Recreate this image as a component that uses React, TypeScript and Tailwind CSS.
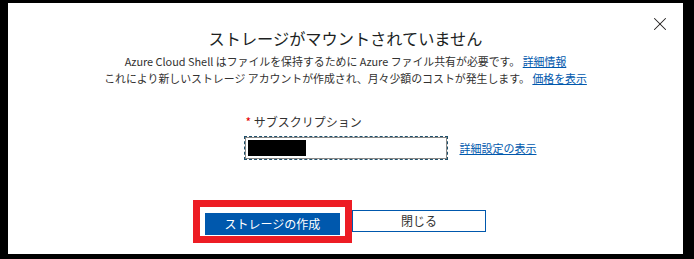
import { X } from "lucide-react";

const font = { fontFamily: '"Noto Sans CJK JP", "Liberation Sans", sans-serif' };

export default function App() {
    return (
        <main className="w-[694px] h-[259px] bg-black pt-[3px] pl-[8px] pr-[11px] pb-[5px]" style={font}>
            <div className="relative w-full h-full bg-white text-[#323130]">
                {/* Close */}
                <button className="absolute right-[12px] top-[10px] text-[#201f1f]">
                    <X className="w-[22px] h-[22px]" strokeWidth={1.1} />
                </button>

                <div className="flex flex-col items-center pt-[24px]">
                    <h1 className="text-[16.2px] leading-[23px] text-[#201f1f]">ストレージがマウントされていません</h1>
                    <p className="mt-[3px] text-[10.9px] leading-[17px] text-center">
                        Azure Cloud Shell はファイルを保持するために Azure ファイル共有が必要です。{" "}
                        <a className="text-[#0058ad] underline" href="#">詳細情報</a>
                        <br />
                        これにより新しいストレージ アカウントが作成され、月々少額のコストが発生します。{" "}
                        <a className="text-[#0058ad] underline" href="#">価格を表示</a>
                    </p>
                </div>

                {/* Subscription */}
                <div className="grid grid-cols-[1fr_auto_1fr] mt-[27px]">
                    <div />
                    <div className="w-[202px]">
                        <label className="block text-[12px] leading-[16px] mb-[7px] pl-[1px]">
                            <span className="text-[#e50000]">*</span> サブスクリプション
                        </label>
                        <div className="h-[22px] border border-[#8a8886] outline-1 outline-dashed outline-[#1d4f6a] p-[2px]">
                            <div className="w-[58px] h-[16px] bg-black" />
                        </div>
                    </div>
                    <div className="flex items-end pb-[3px]">
                        <a className="ml-[13px] text-[11px] leading-[16px] text-[#0058ad] underline" href="#">詳細設定の表示</a>
                    </div>
                </div>

                {/* Buttons */}
                <div className="flex justify-center gap-[12px] mt-[51px]">
                    <div className="relative">
                        <button className="w-[135px] h-[22px] bg-[#0058ad] text-white text-[12px] leading-[22px]">
                            ストレージの作成
                        </button>
                        <div className="absolute -left-[12px] -top-[10px] -right-[12px] -bottom-[8px] border-[7px] border-[#ed1c24]" />
                    </div>
                    <button className="w-[134px] h-[22px] border border-[#0058ad] text-[#323130] text-[12px] leading-[20px]">
                        閉じる
                    </button>
                </div>
            </div>
        </main>
    );
}
